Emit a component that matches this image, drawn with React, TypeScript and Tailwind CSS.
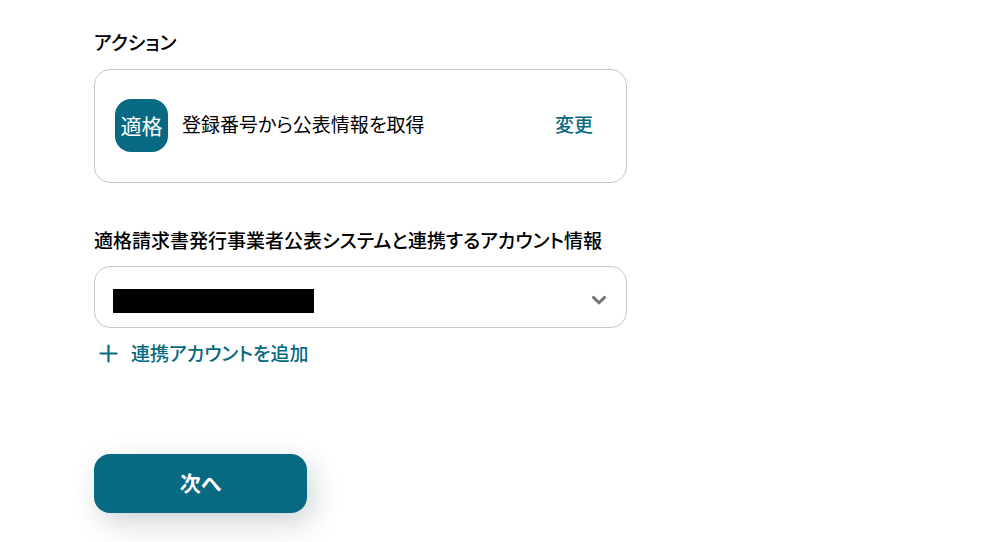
import { useId } from "react";

function ActionCard() {
  return (
    <div className="flex items-center rounded-2xl border border-[#c8c8c8] pb-[30px] pl-5 pr-[33px] pt-[29px]">
      <span className="flex size-[53px] shrink-0 items-center justify-center rounded-2xl bg-[#086982] pb-0.5 text-[21px] text-white">
        適格
      </span>
      <span className="ml-[14px] pb-1 text-black">登録番号から公表情報を取得</span>
      <button type="button" className="ml-auto shrink-0 pb-1 font-medium text-[#086982]">
        変更
      </button>
    </div>
  );
}

function AccountSelect({ id }: { id: string }) {
  return (
    <div className="relative">
      <select
        id={id}
        className="block h-[62px] w-full appearance-none rounded-2xl border border-[#c8c8c8] bg-white px-[18px] text-black"
      >
        <option value="account" aria-label="非表示のアカウント"></option>
      </select>
      <span className="pointer-events-none absolute left-[19px] top-[23px] h-6 w-[201px] bg-black" />
      <svg
        className="pointer-events-none absolute right-5 top-[26px] h-4 w-4"
        viewBox="0 0 16 16"
        fill="none"
        stroke="#757575"
        strokeWidth="2.9"
        aria-hidden="true"
      >
        <path d="M2.4 5.4L8 10.8L13.6 5.4" strokeLinecap="round" strokeLinejoin="miter" />
      </svg>
    </div>
  );
}

export default function App() {
  const accountId = useId();
  return (
    <main
      lang="ja"
      className="min-h-screen bg-white px-6 pb-7 pt-7 font-['Noto_Sans_CJK_JP',sans-serif] text-[19px] leading-7 [font-feature-settings:'palt'] sm:pl-[94px]"
    >
      <form className="w-full max-w-[533px]" onSubmit={(e) => e.preventDefault()}>
        <h2 className="mb-[13px] font-medium text-black">アクション</h2>
        <ActionCard />
        <label htmlFor={accountId} className="mb-3 mt-[43px] block font-medium text-black">
          適格請求書発行事業者公表システムと連携するアカウント情報
        </label>
        <AccountSelect id={accountId} />
        <button type="button" className="mt-[11px] flex items-center gap-[13px] pl-[5px] font-medium text-[#086982]">
          <svg
            className="size-[19px]"
            viewBox="0 0 19 19"
            stroke="currentColor"
            strokeWidth="2.2"
            strokeLinecap="round"
            aria-hidden="true"
          >
            <path d="M1.5 9.5H17.5M9.5 1.5V17.5" />
          </svg>
          連携アカウントを追加
        </button>
        <button
          type="submit"
          className="mt-[87px] block h-[59px] w-[213px] rounded-2xl bg-[#086982] pb-1 text-[21px] font-bold text-white shadow-[6px_10px_28px_rgba(20,40,60,0.2)]"
        >
          次へ
        </button>
      </form>
    </main>
  );
}
